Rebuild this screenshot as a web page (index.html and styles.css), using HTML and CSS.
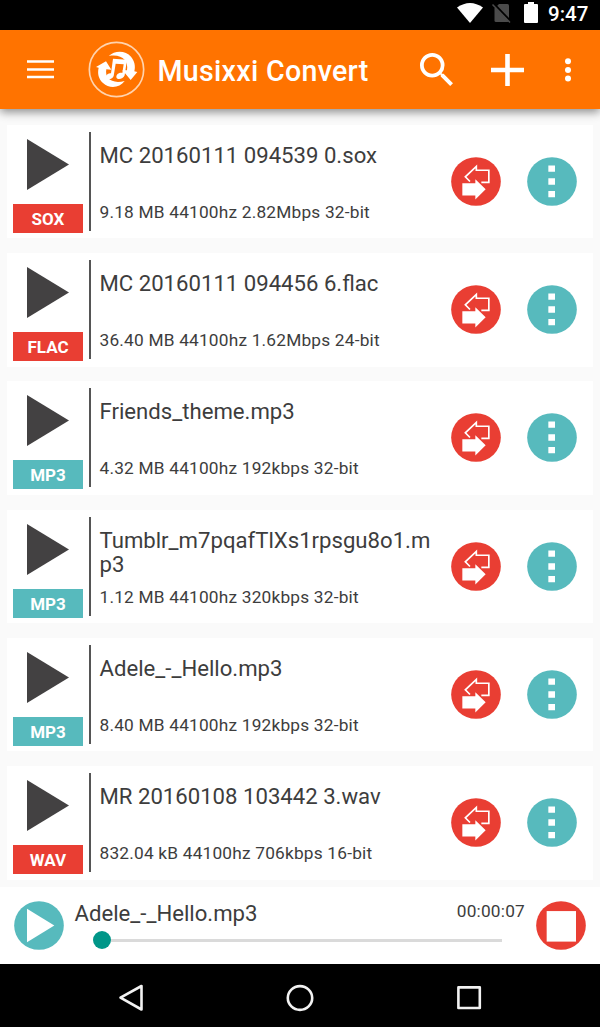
FILE: index.html
```html
<!DOCTYPE html>
<html lang="en">
<head>
    <meta charset="UTF-8">
    <meta name="viewport" content="width=device-width, initial-scale=1.0">
    <title>Musixxi Convert</title>
    <link rel="stylesheet" href="styles.css">
</head>
<body>
    <!-- shared icons -->
    <svg class="sprite" width="0" height="0">
        <symbol id="play" viewBox="0 0 42 51" preserveAspectRatio="none">
            <path d="M0 0L42 25.5L0 51Z" fill="#434142"/>
        </symbol>
        <symbol id="convert" viewBox="0 0 150 146" preserveAspectRatio="none">
            <ellipse cx="75" cy="73" rx="74.5" ry="72.5" fill="#e93e33"/>
            <path d="M91 75.500H113.500V39.500H76V28L43 59L57 73" fill="none" stroke="#fff" stroke-width="5"/>
            <path d="M34 78H73V66L104 96L73 127V115H34Z" fill="#fff"/>
        </symbol>
        <symbol id="more" viewBox="0 0 150 146" preserveAspectRatio="none">
            <ellipse cx="75" cy="73" rx="74.5" ry="72.5" fill="#57babd"/>
            <path d="M64 25h20v19h-20zM64 63h20v20h-20zM64 101h20v19h-20z" fill="#fff"/>
        </symbol>
    </svg>

    <div class="phone">
        <div class="status-bar">
            <svg class="wifi" viewBox="0 0 26 20"><path d="M0 4.5Q13 -4.5 26 4.5L13 20Z" fill="#fff"/></svg>
            <svg class="sim" viewBox="0 0 19 20">
                <path d="M7 1H15.5Q17 1 17 2.5V17.5Q17 19 15.5 19H4Q2.500 19 2.500 17.500V5.500Z" fill="#4b4b4b"/>
                <path d="M1.600 0.500L19 18.500" stroke="#000" stroke-width="2"/>
                <path d="M0.500 1.500L18 19.500" stroke="#4b4b4b" stroke-width="1.500"/>
            </svg>
            <svg class="battery" viewBox="0 0 14 21"><path d="M4 0H10V2H13Q14 2 14 3V20Q14 21 13 21H1Q0 21 0 20V3Q0 2 1 2H4Z" fill="#fff"/></svg>
            <span class="clock">9:47</span>
        </div>

        <header class="app-bar">
            <svg class="menu" viewBox="0 0 27 19"><path d="M0 1.500H27M0 9.500H27M0 17H27" stroke="#fff" stroke-width="2.500"/></svg>
            <svg class="logo" viewBox="264 123 171 171">
                <circle cx="349.500" cy="208.500" r="81.500" fill="none" stroke="#ffd3ae" stroke-width="5"/>
                <g fill="#fff">
                    <path d="M326 168C345 150 377 151 393 170C404 183 407 199 403 214L412 216L392 240L367 210L381 211C386 182 366 161 326 168Z"/>
                    <path d="M374 243C359 264 328 267 309 249C295 236 292 220 296 203L288 201L318 184L334 209L319 208C314 234 334 253 374 243Z"/>
                    <path d="M339 176L381 179L374 226C371 237 350 242 349 231C349 222 359 217 367 219L371 193L347 191L341 228C337 239 317 242 318 232C318 223 327 219 333 220Z"/>
                </g>
            </svg>
            <h1 class="app-title">Musixxi Convert</h1>
            <svg class="search" viewBox="3 3 17.500 17.500"><path fill="#fff" d="M15.500 14h-.79l-.28-.27A6.471 6.471 0 0 0 16 9.500 6.500 6.500 0 1 0 9.500 16c1.610 0 3.090-.59 4.230-1.570l.27.28v.79l5 4.990L20.490 19l-4.990-5zm-6 0C7.010 14 5 11.990 5 9.500S7.010 5 9.500 5 14 7.010 14 9.500 11.990 14 9.500 14z"/></svg>
            <svg class="add" viewBox="0 0 33 32"><path d="M16.500 0V32M0 16H33" stroke="#fff" stroke-width="4.600"/></svg>
            <svg class="overflow" viewBox="0 0 6 24"><g fill="#fff"><circle cx="3" cy="3.300" r="3"/><circle cx="3" cy="12" r="3"/><circle cx="3" cy="20.500" r="3"/></g></svg>
        </header>

        <main class="list">
            <div class="card">
                <div class="side"><svg class="play"><use href="#play"/></svg><span class="badge red">SOX</span></div>
                <div class="info"><p class="name">MC 20160111 094539 0.sox</p><p class="meta">9.18 MB 44100hz 2.82Mbps 32-bit</p></div>
                <svg class="round"><use href="#convert"/></svg>
                <svg class="round"><use href="#more"/></svg>
            </div>
            <div class="card">
                <div class="side"><svg class="play"><use href="#play"/></svg><span class="badge red">FLAC</span></div>
                <div class="info"><p class="name">MC 20160111 094456 6.flac</p><p class="meta">36.40 MB 44100hz 1.62Mbps 24-bit</p></div>
                <svg class="round"><use href="#convert"/></svg>
                <svg class="round"><use href="#more"/></svg>
            </div>
            <div class="card">
                <div class="side"><svg class="play"><use href="#play"/></svg><span class="badge teal">MP3</span></div>
                <div class="info"><p class="name">Friends_theme.mp3</p><p class="meta">4.32 MB 44100hz 192kbps 32-bit</p></div>
                <svg class="round"><use href="#convert"/></svg>
                <svg class="round"><use href="#more"/></svg>
            </div>
            <div class="card">
                <div class="side"><svg class="play"><use href="#play"/></svg><span class="badge teal">MP3</span></div>
                <div class="info"><p class="name">Tumblr_m7pqafTlXs1rpsgu8o1.mp3</p><p class="meta">1.12 MB 44100hz 320kbps 32-bit</p></div>
                <svg class="round"><use href="#convert"/></svg>
                <svg class="round"><use href="#more"/></svg>
            </div>
            <div class="card">
                <div class="side"><svg class="play"><use href="#play"/></svg><span class="badge teal">MP3</span></div>
                <div class="info"><p class="name">Adele_-_Hello.mp3</p><p class="meta">8.40 MB 44100hz 192kbps 32-bit</p></div>
                <svg class="round"><use href="#convert"/></svg>
                <svg class="round"><use href="#more"/></svg>
            </div>
            <div class="card">
                <div class="side"><svg class="play"><use href="#play"/></svg><span class="badge red">WAV</span></div>
                <div class="info"><p class="name">MR 20160108 103442 3.wav</p><p class="meta">832.04 kB 44100hz 706kbps 16-bit</p></div>
                <svg class="round"><use href="#convert"/></svg>
                <svg class="round"><use href="#more"/></svg>
            </div>
        </main>

        <footer class="player">
            <svg class="round" viewBox="0 0 150 146" preserveAspectRatio="none">
                <ellipse cx="75" cy="73" rx="74.500" ry="72.500" fill="#57babd"/>
                <path d="M39 23L121 73L39 123Z" fill="#fff"/>
            </svg>
            <div class="now">
                <div class="now-top"><span class="now-name">Adele_-_Hello.mp3</span><span class="time">00:00:07</span></div>
                <div class="seek"><span class="thumb"></span><span class="track"></span></div>
            </div>
            <svg class="round" viewBox="0 0 150 146" preserveAspectRatio="none">
                <ellipse cx="75" cy="73" rx="74.500" ry="72.500" fill="#e93e33"/>
                <path d="M32 30H120V121H32Z" fill="#fff"/>
            </svg>
        </footer>

        <nav class="nav-bar">
            <svg viewBox="0 0 26 28"><path d="M23.500 2V25.500L2.500 13.700Z" fill="none" stroke="#f2f2f2" stroke-width="2.600" stroke-linejoin="round"/></svg>
            <svg viewBox="0 0 26 28"><ellipse cx="13" cy="14" rx="12.200" ry="11.900" fill="none" stroke="#f2f2f2" stroke-width="2.600"/></svg>
            <svg viewBox="0 0 26 28"><rect x="2.400" y="3.400" width="21.400" height="20.600" fill="none" stroke="#f2f2f2" stroke-width="2.600" stroke-linejoin="round"/></svg>
        </nav>
    </div>
</body>
</html>
```
FILE: styles.css
```css
* {
    box-sizing: border-box;
}

body {
    margin: 0;
    font-family: Roboto, sans-serif;
    color: #3d3d3d;
    background-color: #fafafa;
}

svg {
    display: block;
    flex: none;
    overflow: visible;
}

p, h1 {
    margin: 0;
}

.sprite {
    position: absolute;
}

.phone {
    width: 600px;
    height: 1027px;
    display: flex;
    flex-direction: column;
    overflow: hidden;
}

/* Status bar */
.status-bar {
    height: 30px;
    flex: none;
    display: flex;
    align-items: flex-start;
    justify-content: flex-end;
    padding: 2px 12px 0 0;
    background-color: #000;
}

.wifi {
    width: 26px;
    height: 20px;
    margin: 1px 9px 0 0;
}

.sim {
    width: 19px;
    height: 20px;
    margin: 1px 13px 0 0;
}

.battery {
    width: 14px;
    height: 21px;
    margin-right: 10px;
}

.clock {
    width: 40px;
    color: #fff;
    font-size: 20.5px;
    font-weight: 500;
    line-height: 24px;
    white-space: nowrap;
}

/* App bar */
.app-bar {
    height: 79px;
    flex: none;
    display: flex;
    align-items: center;
    padding: 0 29px 0 27px;
    background-color: #ff7300;
    box-shadow: 0 3px 9px rgba(0, 0, 0, 0.45);
    z-index: 1;
}

.menu {
    width: 27px;
    height: 19px;
}

.logo {
    width: 57px;
    height: 57px;
    margin-left: 34px;
}

.app-title {
    flex: 1;
    margin: 3px 0 0 12.5px;
    color: #fff;
    font-size: 28.6px;
    font-weight: 500;
    line-height: 34px;
    letter-spacing: 0.3px;
    white-space: nowrap;
}

.search {
    width: 33px;
    height: 33px;
}

.add {
    width: 33px;
    height: 32px;
    margin: 0 41px 0 38px;
}

.overflow {
    width: 6px;
    height: 24px;
}

/* File list */
.list {
    height: 778px;
    flex: none;
    display: flex;
    flex-direction: column;
    gap: 14.8px;
    padding: 15.8px 7px 0;
}

.card {
    height: 113.5px;
    flex: none;
    display: flex;
    padding: 7px 16px 0 6px;
    background-color: #fff;
}

.side {
    width: 70px;
    padding-top: 7px;
}

.play {
    width: 42px;
    height: 51px;
    margin: 0 0 14px 14px;
}

.badge {
    display: block;
    height: 29px;
    color: #fff;
    font-size: 17px;
    font-weight: 700;
    line-height: 30px;
    text-align: center;
}

.red {
    background-color: #e93e33;
}

.teal {
    background-color: #57babd;
}

.info {
    width: 346px;
    height: 99px;
    margin-left: 6px;
    padding: 11px 0 0 8.5px;
    border-left: 2px solid #555;
}

.name {
    height: 58px;
    font-size: 22.15px;
    line-height: 24.3px;
    word-break: break-all;
}

.meta {
    font-size: 17.3px;
    line-height: 22px;
    letter-spacing: 0.2px;
    white-space: nowrap;
}

.round {
    width: 50px;
    height: 49px;
}

.card .round {
    margin: 25px 0 0 16px;
}

.card .round + .round {
    margin-left: 26px;
}

/* Player */
.player {
    height: 77px;
    flex: none;
    display: flex;
    padding: 14px 14px 0;
    background-color: #fff;
}

.now {
    flex: 1;
    padding: 0 11px 0 10.5px;
}

.now-top {
    height: 30px;
    display: flex;
    justify-content: space-between;
}

.now-name {
    font-size: 22.15px;
    line-height: 24px;
}

.time {
    font-size: 17.3px;
    line-height: 20px;
    letter-spacing: 0.2px;
}

.seek {
    display: flex;
    align-items: center;
    margin: 0 23px 0 18.5px;
}

.thumb {
    width: 18px;
    height: 18px;
    border-radius: 50%;
    background-color: #009688;
}

.track {
    flex: 1;
    height: 3px;
    background-color: #dadada;
}

/* Navigation bar */
.nav-bar {
    height: 63px;
    flex: none;
    display: flex;
    justify-content: center;
    gap: 143px;
    padding-top: 20px;
    background-color: #000;
}

.nav-bar svg {
    width: 26px;
    height: 28px;
}
```
